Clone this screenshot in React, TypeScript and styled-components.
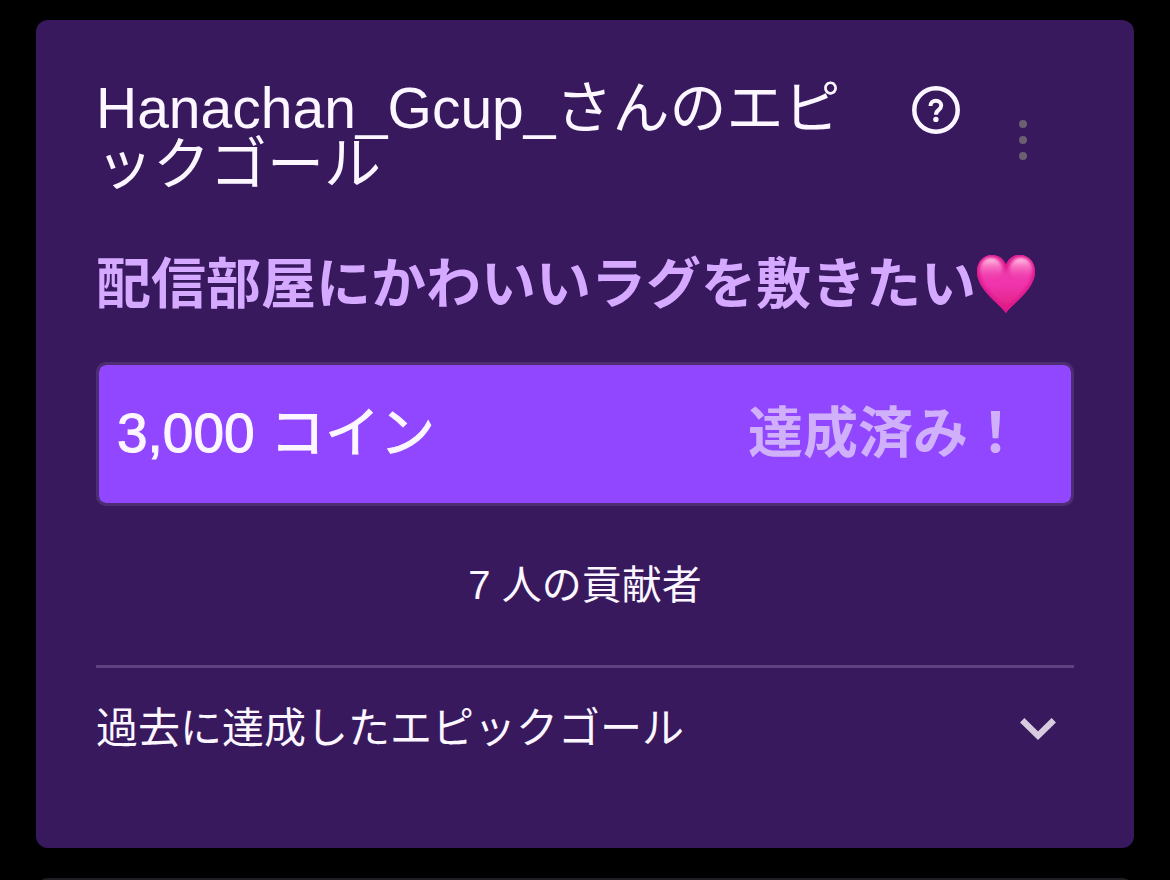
import React from "react";
import styled, { createGlobalStyle } from "styled-components";

const GlobalStyle = createGlobalStyle`
  *, *::before, *::after { box-sizing: border-box; }
  body {
    margin: 0;
    background: #000;
    color: #fbf6ff;
    font-family: "Liberation Sans", "Noto Sans CJK JP", sans-serif;
  }
  h1, h2, p { margin: 0; font-weight: 400; }
`;

const Page = styled.main`
  display: flex;
  flex-direction: column;
  gap: 30px;
  height: 100vh;
  overflow: hidden;
  padding: 20px 36px 0;
`;

const Card = styled.section`
  flex: none;
  padding: 60px 60px 89px;
  border-radius: 12px;
  background: #38195e;
`;

const NextCard = styled.section`
  flex: none;
  height: 120px;
  border-radius: 12px;
  background: #1f1f23;
`;

const Header = styled.header`
  display: flex;
  align-items: flex-start;
`;

const Title = styled.h1`
  flex: 1;
  padding-right: 24px;
  font-size: 57px;
  line-height: 56px;
  word-break: break-all;
  line-break: anywhere;
`;

const IconButton = styled.button`
  display: flex;
  align-items: center;
  justify-content: center;
  flex: none;
  width: 60px;
  height: 60px;
  padding: 0;
  border: 0;
  background: none;
  color: inherit;
  cursor: pointer;
`;

const MenuButton = styled(IconButton)`
  margin: 30px 21px 0 27px;
  color: #6b5f70;
`;

const Goal = styled.h2`
  display: flex;
  align-items: center;
  margin-top: 52px;
  color: #d4a9ff;
  font-size: 55px;
  font-weight: 700;
  line-height: 80px;
  white-space: nowrap;
`;

const Progress = styled.div`
  display: flex;
  align-items: center;
  justify-content: space-between;
  height: 144px;
  margin-top: 38px;
  padding: 0 48px 2px 18px;
  border: 3px solid #4d2e72;
  border-radius: 10px;
  background: #9147ff;
  background-clip: padding-box;
  font-size: 55px;
  line-height: 64px;
  white-space: nowrap;
`;

const Coins = styled.span`
  -webkit-text-stroke: 1px currentColor;
`;

const Done = styled.strong`
  color: #d0b0fa;
  font-weight: 700;
`;

const Contributors = styled.p`
  margin-top: 49px;
  font-size: 40px;
  line-height: 60px;
  text-align: center;
`;

const PastGoals = styled.button`
  display: flex;
  align-items: center;
  justify-content: space-between;
  width: 100%;
  margin-top: 50px;
  padding: 31px 18px 0 0;
  border: 0;
  border-top: 3px solid #5e417f;
  background: none;
  color: inherit;
  font: inherit;
  font-size: 42px;
  line-height: 60px;
  text-align: left;
  cursor: pointer;
`;

function HelpIcon() {
  return (
    <svg width="48" height="48" viewBox="0 0 48 48" fill="none" aria-hidden="true">
      <circle cx="24" cy="24" r="21.700" stroke="currentColor" strokeWidth="4.500" />
      <path
        d="M18.500 20c0-3.200 2.200-5.200 5.400-5.200s5.300 1.900 5.300 4.800c0 2.200-1.200 3.300-2.700 4.500-1.700 1.300-2.500 2.200-2.500 4.700"
        stroke="currentColor"
        strokeWidth="4"
      />
      <circle cx="23.900" cy="33.400" r="2.700" fill="currentColor" />
    </svg>
  );
}

function DotsIcon() {
  return (
    <svg width="8" height="40" viewBox="0 0 8 40" fill="currentColor" aria-hidden="true">
      <circle cx="4" cy="4" r="4" />
      <circle cx="4" cy="20" r="4" />
      <circle cx="4" cy="36" r="4" />
    </svg>
  );
}

function HeartIcon() {
  const shape =
    "M30 59C25 51 1 36 1 17.500C1 8 7.500 1 16 1C22.500 1 27.500 4.500 30 11C32.500 4.500 37.500 1 44 1C52.500 1 59 8 59 17.500C59 36 35 51 30 59Z";
  return (
    <svg width="60" height="60" viewBox="0 0 60 60" role="img" aria-label="ハート">
      <defs>
        <linearGradient id="heartBody" x1="0" y1="0" x2="0" y2="1">
          <stop offset="0" stopColor="#ea3fa6" />
          <stop offset="0.500" stopColor="#f035ae" />
          <stop offset="0.800" stopColor="#e5278f" />
          <stop offset="1" stopColor="#d8127a" />
        </linearGradient>
        <linearGradient id="heartShine" x1="0" y1="0" x2="0" y2="1">
          <stop offset="0" stopColor="#ffd3ee" />
          <stop offset="0.350" stopColor="#ff8fd0" stopOpacity="0.700" />
          <stop offset="1" stopColor="#f54db8" stopOpacity="0" />
        </linearGradient>
        <clipPath id="heartClip">
          <path d={shape} />
        </clipPath>
        <filter id="heartSoft" x="-20%" y="-20%" width="140%" height="140%">
          <feGaussianBlur stdDeviation="1.500" />
        </filter>
      </defs>
      <path d={shape} fill="url(#heartBody)" />
      <g clipPath="url(#heartClip)">
        <path d={shape} fill="none" stroke="#e0148c" strokeWidth="5" filter="url(#heartSoft)" />
        <ellipse cx="15" cy="15" rx="11" ry="11" fill="url(#heartShine)" filter="url(#heartSoft)" />
        <ellipse cx="45" cy="15" rx="11" ry="11" fill="url(#heartShine)" filter="url(#heartSoft)" />
      </g>
    </svg>
  );
}

function ChevronIcon() {
  return (
    <svg width="36" height="22" viewBox="0 0 36 22" fill="none" aria-hidden="true">
      <path d="M2.200 2.200L18 17.600L33.800 2.200" stroke="#d8cbe0" strokeWidth="6.200" />
    </svg>
  );
}

export default function App() {
  return (
    <>
      <GlobalStyle />
      <Page lang="ja">
        <Card>
          <Header>
            <Title>Hanachan_Gcup_さんのエピックゴール</Title>
            <IconButton type="button" aria-label="ヘルプ">
              <HelpIcon />
            </IconButton>
            <MenuButton type="button" aria-label="メニュー">
              <DotsIcon />
            </MenuButton>
          </Header>
          <Goal>
            配信部屋にかわいいラグを敷きたい
            <HeartIcon />
          </Goal>
          <Progress>
            <Coins>3,000 コイン</Coins>
            <Done>達成済み！</Done>
          </Progress>
          <Contributors>7 人の貢献者</Contributors>
          <PastGoals type="button" aria-expanded="false">
            過去に達成したエピックゴール
            <ChevronIcon />
          </PastGoals>
        </Card>
        <NextCard />
      </Page>
    </>
  );
}
